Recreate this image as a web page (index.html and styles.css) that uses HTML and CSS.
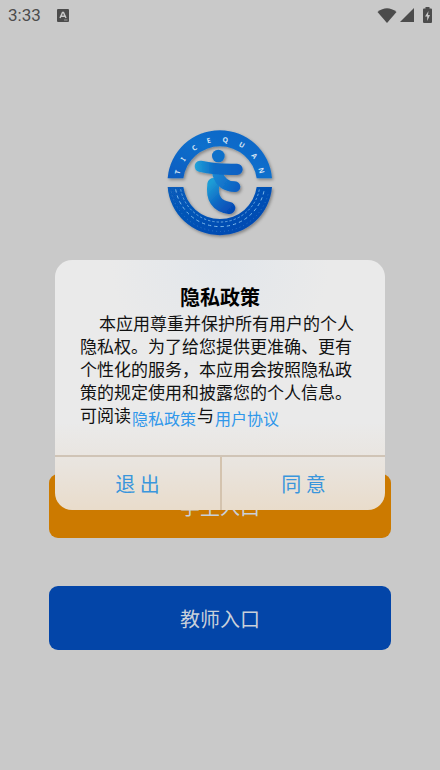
FILE: index.html
```
<!DOCTYPE html>
<html lang="zh-CN">
<head>
    <meta charset="UTF-8">
    <meta name="viewport" content="width=device-width, initial-scale=1.0">
    <title>隐私政策</title>
    <link rel="stylesheet" href="styles.css">
</head>
<body>
    <div class="status-bar">
        <span class="time">3:33</span>
        <svg class="app-icon" width="12" height="13" viewBox="0 0 12 13">
            <rect width="12" height="13" rx="1" fill="#4c4c4c"/>
            <path d="M3 9 L5.5 3.5 H6.5 L9 9 M4.2 7.3 H7.8" fill="none" stroke="#c8c8c8" stroke-width="1.5"/>
            <path d="M7 11 H10.5" stroke="#999" stroke-width="1"/>
        </svg>
        <div class="status-icons">
            <svg width="20" height="15" viewBox="0 0 20 15">
                <path d="M0.5 4 Q10 -3.5 19.5 4 L10 15 Z" fill="#4c4c4c"/>
            </svg>
            <svg width="14" height="14" viewBox="0 0 14 14">
                <path d="M14 0 V14 H0 Z" fill="#4c4c4c"/>
            </svg>
            <svg class="battery" width="9" height="16" viewBox="0 0 9 16">
                <path d="M2.5 0 H6.5 V1.5 H8 Q9 1.5 9 2.5 V15 Q9 16 8 16 H1 Q0 16 0 15 V2.5 Q0 1.5 1 1.5 H2.5 Z" fill="#4c4c4c"/>
                <path d="M5.5 4 L2 9.5 H4.2 V14 L7 8 H5 Z" fill="#c8c8c8"/>
            </svg>
        </div>
    </div>

    <main class="home">
        <svg class="logo" viewBox="0 0 378 378" role="img" aria-label="TICEQUAN">
            <defs>
                <linearGradient id="ringTop" x1="0" y1="1" x2="1" y2="0">
                    <stop offset="0" stop-color="#0a5cc0"/>
                    <stop offset="0.5" stop-color="#0d6fcc"/>
                    <stop offset="1" stop-color="#0b62c4"/>
                </linearGradient>
                <linearGradient id="ringBottom" x1="0" y1="0" x2="1" y2="1">
                    <stop offset="0" stop-color="#075cba"/>
                    <stop offset="1" stop-color="#0446b0"/>
                </linearGradient>
                <linearGradient id="arms" gradientUnits="userSpaceOnUse" x1="112" y1="0" x2="258" y2="0">
                    <stop offset="0" stop-color="#22a4da"/>
                    <stop offset="0.4" stop-color="#0c6cc6"/>
                    <stop offset="1" stop-color="#0a5fc4"/>
                </linearGradient>
                <linearGradient id="leg" gradientUnits="userSpaceOnUse" x1="150" y1="200" x2="225" y2="275">
                    <stop offset="0" stop-color="#1f9dd6"/>
                    <stop offset="0.5" stop-color="#0c68c4"/>
                    <stop offset="1" stop-color="#0548b4"/>
                </linearGradient>
                <linearGradient id="hip" gradientUnits="userSpaceOnUse" x1="165" y1="160" x2="245" y2="205">
                    <stop offset="0" stop-color="#1a8ad4"/>
                    <stop offset="1" stop-color="#0a5fc2"/>
                </linearGradient>
                <filter id="shadow" filterUnits="userSpaceOnUse" x="0" y="0" width="378" height="378">
                    <feDropShadow dx="4" dy="5" stdDeviation="4" flood-color="#000" flood-opacity="0.35"/>
                </filter>
            </defs>
            <g filter="url(#shadow)">
                <path d="M32 175 A157 157 0 0 1 345 175 H299 A111 111 0 0 0 79 175 Z" fill="url(#ringTop)"/>
                <path d="M32 201 A157 157 0 0 0 345 201 H299 A111 111 0 0 1 79 201 Z" fill="url(#ringBottom)"/>
            </g>
            <g fill="none" stroke="#7db9ea">
                <path d="M56 208 A135 135 0 0 0 322 208" stroke-width="3" stroke-dasharray="10 9"/>
                <path d="M71 208 A120 120 0 0 0 307 208" stroke-width="3" stroke-dasharray="7 6" opacity="0.8"/>
                <path d="M43 215 A149 149 0 0 0 335 215" stroke-width="2" stroke-dasharray="3 9" opacity="0.5"/>
            </g>
            <g class="logo-letters">
                <text transform="translate(62 157) rotate(-76)" dy="7">T</text>
                <text transform="translate(79 118) rotate(-57)" dy="7">I</text>
                <text transform="translate(112 84) rotate(-36)" dy="7">C</text>
                <text transform="translate(155 62) rotate(-15)" dy="7">E</text>
                <text transform="translate(205 60) rotate(7)" dy="7">Q</text>
                <text transform="translate(254 75) rotate(30)" dy="7">U</text>
                <text transform="translate(292 108) rotate(52)" dy="7">A</text>
                <text transform="translate(313 152) rotate(74)" dy="7">N</text>
            </g>
            <g filter="url(#shadow)" fill="none" stroke-linecap="round" stroke-linejoin="round">
                <path d="M169 192 Q160 256 217 264" stroke="url(#leg)" stroke-width="36"/>
                <path d="M182 162 Q194 200 234 200" stroke="url(#hip)" stroke-width="32"/>
                <path d="M130 139 Q180 150 240 148" stroke="url(#arms)" stroke-width="34"/>
                <circle cx="184" cy="108" r="19" fill="#0c70ca"/>
            </g>
        </svg>

        <div class="entries">
            <button class="entry student" type="button">学生入口</button>
            <button class="entry teacher" type="button">教师入口</button>
        </div>
    </main>

    <div class="overlay">
        <div class="dialog" role="dialog" aria-modal="true" aria-labelledby="dialogTitle">
            <div class="dialog-body">
                <h1 id="dialogTitle">隐私政策</h1>
                <p>本应用尊重并保护所有用户的个人隐私权。为了给您提供更准确、更有个性化的服务，本应用会按照隐私政策的规定使用和披露您的个人信息。可阅读<a href="#privacy">隐私政策</a>与<a href="#agreement">用户协议</a></p>
            </div>
            <div class="dialog-actions">
                <button type="button">退 出</button>
                <button type="button">同 意</button>
            </div>
        </div>
    </div>
</body>
</html>
```
FILE: styles.css
```
* {
    box-sizing: border-box;
}
body {
    font-family: "Noto Sans CJK SC", sans-serif;
    background-color: #c9c9c9;
    color: #111;
    margin: 0;
    min-height: 100vh;
}
button {
    font-family: inherit;
    border: none;
    padding: 0;
    cursor: pointer;
}
.status-bar {
    display: flex;
    align-items: center;
    height: 30px;
    padding: 0 8px;
}
.time {
    font-family: Roboto, sans-serif;
    font-size: 17px;
    color: #4c4c4c;
}
.app-icon {
    margin-left: 16px;
}
.status-icons {
    display: flex;
    align-items: center;
    gap: 3px;
    margin-left: auto;
}
.battery {
    margin-left: 6px;
}
.home {
    display: flex;
    flex-direction: column;
    align-items: center;
    padding: 90px 49px 40px;
}
.logo {
    width: 126px;
    height: 126px;
}
.logo-letters {
    font-family: "Noto Sans", sans-serif;
    font-size: 21px;
    font-weight: bold;
    fill: #d3e4f4;
    text-anchor: middle;
}
.entries {
    display: flex;
    flex-direction: column;
    gap: 48px;
    width: 100%;
    margin-top: 228px;
}
.entry {
    height: 64px;
    border-radius: 9px;
    font-size: 20px;
    color: #c9d0da;
}
.student {
    background: #cc7a00;
}
.teacher {
    background: #0345a8;
}
.overlay {
    position: absolute;
    inset: 0;
    display: flex;
    align-items: center;
    justify-content: center;
    padding: 0 55px;
}
.dialog {
    width: 100%;
    max-width: 420px;
    border-radius: 17px;
    overflow: hidden;
    background:
        radial-gradient(circle at 50% 0, rgba(220, 227, 235, 0.6), rgba(234, 234, 234, 0) 110px),
        linear-gradient(#eaeaea 65%, #e9e4de 82%, #e9dccb);
}
.dialog-body {
    padding: 23px 25px 29px;
}
.dialog-body h1 {
    margin: 0;
    font-size: 20px;
    line-height: 28px;
    text-align: center;
    color: #000;
}
.dialog-body p {
    margin: 0;
    font-size: 17px;
    line-height: 23px;
    text-indent: 19px;
}
.dialog-body a {
    display: inline-block;
    padding: 0 1px;
    font-size: 16px;
    line-height: 16px;
    text-indent: 0;
    vertical-align: bottom;
    color: #2f97ea;
    text-decoration: none;
}
.dialog-actions {
    display: grid;
    grid-template-columns: 1fr 1fr;
    border-top: 2px solid #d0c4b6;
}
.dialog-actions button {
    height: 53px;
    font-size: 20px;
    color: #3a96dc;
    background: none;
}
.dialog-actions button + button {
    border-left: 2px solid #d4c3ae;
}
```
